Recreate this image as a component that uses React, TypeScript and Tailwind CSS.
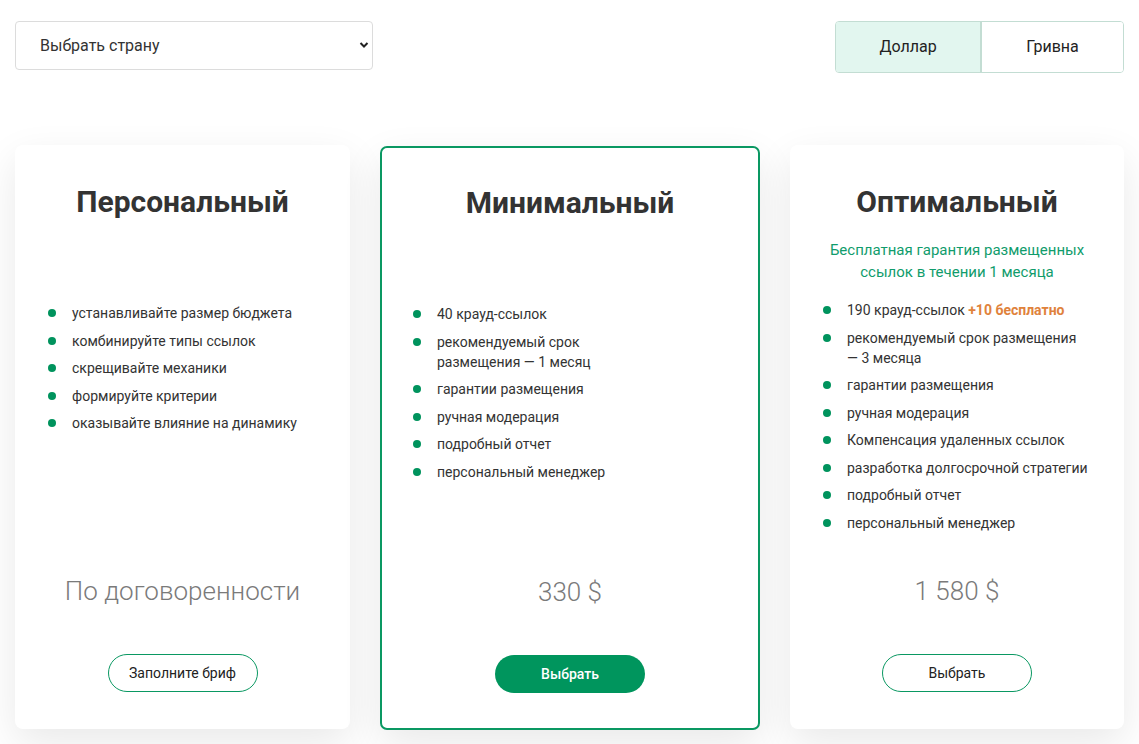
import React from 'react';

type Item = { text: React.ReactNode };

const Bullet = ({ children, shift }: { children: React.ReactNode; shift?: boolean }) => (
  <li className="flex items-start mb-[7.5px]">
    <span
      className={
        'mt-[6px] w-[8px] h-[8px] rounded-full bg-[#00935d] shrink-0 ' + (shift ? 'ml-[31px]' : 'ml-[33px]')
      }
    />
    <span className="ml-[16px] pr-4 text-[14px] leading-5 text-[#333]">{children}</span>
  </li>
);

const Card = ({
  title,
  subtitle,
  items,
  price,
  button,
  featured,
  width,
  listTop,
}: {
  title: string;
  subtitle?: React.ReactNode;
  items: Item[];
  price: string;
  button: string;
  featured?: boolean;
  width: string;
  listTop: string;
}) => (
  <div
    className={
      'flex flex-col bg-white h-[584px] shrink-0 shadow-[0_14px_40px_rgba(0,0,0,0.09)] ' +
      width +
      ' ' +
      (featured ? 'border-2 border-[#0a9862] rounded-[7px] mt-[1px]' : 'rounded-[8px]')
    }
  >
    <h2 className={'text-center font-bold text-[30px] leading-[36px] text-[#333] ' + (featured ? 'pt-[37px]' : 'pt-[39px]')}>
      {title}
    </h2>
    {subtitle && (
      <p className="mt-[19px] text-center text-[15px] leading-[22px] text-[#109c6c] px-8">{subtitle}</p>
    )}
    <ul className={listTop}>
      {items.map((it, i) => (
        <Bullet key={i} shift={featured}>
          {it.text}
        </Bullet>
      ))}
    </ul>
    <div className="flex-1" />
    <div className="text-center font-light text-[26px] leading-[32px] text-[#7a7a7a]">{price}</div>
    <div className={'flex justify-center mt-[47px] ' + (featured ? 'pb-[35px]' : 'pb-[37px]')}>
      <button
        className={
          'w-[150px] h-[38px] rounded-full text-[14px] ' +
          (featured
            ? 'bg-[#00955d] text-white font-medium'
            : 'border border-[#0a9862] text-[#222] bg-white')
        }
      >
        {button}
      </button>
    </div>
  </div>
);

export default function App() {
  return (
    <div className="min-h-[744px] bg-white px-[15px] pt-[21px] font-['Roboto',sans-serif]">
      <div className="flex justify-between items-start">
        <div className="relative w-[358px] h-[49px]">
          <select className="appearance-none w-full h-full rounded-[4px] border border-[#dcdcdc] bg-white pl-[24px] text-[16px] text-[#333] outline-none">
            <option>Выбрать страну</option>
          </select>
          <svg
            className="absolute right-[4px] top-[20px] pointer-events-none"
            width="10"
            height="8"
            viewBox="0 0 10 8"
          >
            <path d="M1.5 2 L5 5.5 L8.5 2" fill="none" stroke="#222" strokeWidth="2" />
          </svg>
        </div>
        <div className="flex h-[52px] rounded-[4px] border border-[#c3ddd3] overflow-hidden">
          <button className="w-[146px] bg-[#e2f6ef] border-r-2 border-[#c3ddd3] text-[16px] text-[#222]">
            Доллар
          </button>
          <button className="w-[141px] bg-white text-[16px] text-[#222]">Гривна</button>
        </div>
      </div>

      <div className="flex gap-[30px] mt-[72px]">
        <Card
          width="w-[335px]"
          title="Персональный"
          listTop="mt-[83px]"
          items={[
            { text: 'устанавливайте размер бюджета' },
            { text: 'комбинируйте типы ссылок' },
            { text: 'скрещивайте механики' },
            { text: 'формируйте критерии' },
            { text: 'оказывайте влияние на динамику' },
          ]}
          price="По договоренности"
          button="Заполните бриф"
        />
        <Card
          featured
          width="w-[380px]"
          title="Минимальный"
          listTop="mt-[83px]"
          items={[
            { text: '40 крауд-ссылок' },
            {
              text: (
                <>
                  рекомендуемый срок
                  <br />
                  размещения — 1 месяц
                </>
              ),
            },
            { text: 'гарантии размещения' },
            { text: 'ручная модерация' },
            { text: 'подробный отчет' },
            { text: 'персональный менеджер' },
          ]}
          price="330 $"
          button="Выбрать"
        />
        <Card
          width="w-[334px]"
          title="Оптимальный"
          subtitle={
            <>
              Бесплатная гарантия размещенных
              <br />
              ссылок в течении 1 месяца
            </>
          }
          listTop="mt-[17px]"
          items={[
            {
              text: (
                <>
                  190 крауд-ссылок <span className="font-bold text-[#e0823c]">+10 бесплатно</span>
                </>
              ),
            },
            {
              text: (
                <>
                  рекомендуемый срок размещения
                  <br />— 3 месяца
                </>
              ),
            },
            { text: 'гарантии размещения' },
            { text: 'ручная модерация' },
            { text: 'Компенсация удаленных ссылок' },
            { text: 'разработка долгосрочной стратегии' },
            { text: 'подробный отчет' },
            { text: 'персональный менеджер' },
          ]}
          price="1 580 $"
          button="Выбрать"
        />
      </div>
    </div>
  );
}
